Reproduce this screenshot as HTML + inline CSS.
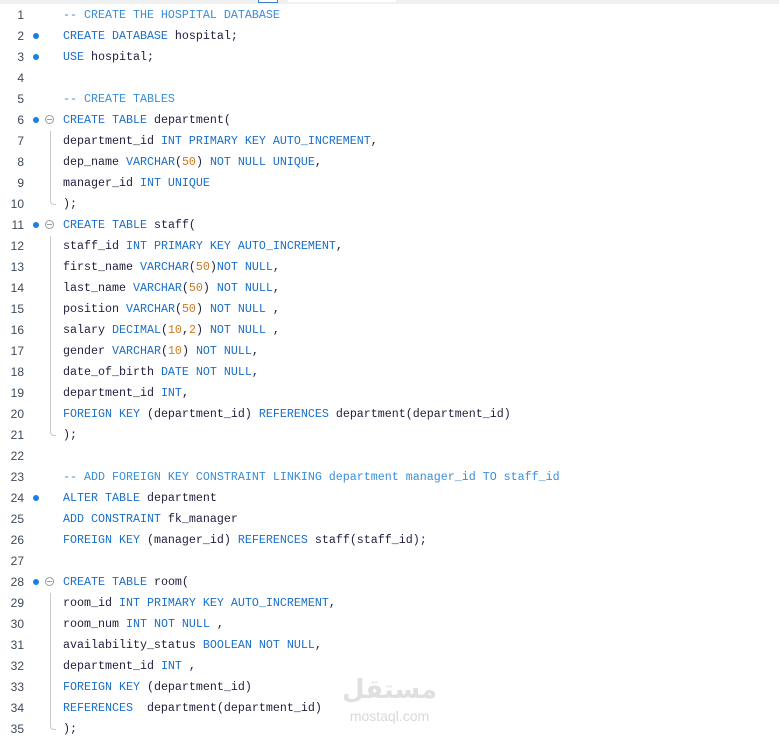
<!DOCTYPE html>
<html><head><style>
body{margin:0;width:779px;height:740px;overflow:hidden;background:#fff;font-family:"Liberation Mono",monospace;font-size:11.67px;}
.top{position:absolute;left:0;top:0;width:779px;height:4px;background:#f0f0f0}
.code{position:absolute;left:0;top:5px;width:779px}
.l{height:21px;line-height:21px;position:relative;white-space:pre;color:#1e1e3c}
.n{position:absolute;left:0;width:24px;text-align:right;color:#3c4a5a;font-family:"Liberation Sans",sans-serif;font-size:12px}
.d{position:absolute;left:33px;top:7px;width:6px;height:6px;border-radius:50%;background:#1a7fe0}
.f{position:absolute;left:45px;top:5px;width:9px;height:9px;border:1px solid #9a9a9a;border-radius:50%;box-sizing:border-box}
.f:after{content:"";position:absolute;left:1px;top:3px;width:5px;height:1px;background:#9a9a9a}
.v{position:absolute;left:50px;top:0;width:1px;height:21px;background:#c8c8c8}
.e{position:absolute;left:50px;top:0;width:5px;height:10px;border-left:1px solid #c8c8c8;border-bottom:1px solid #c8c8c8;border-bottom-left-radius:4px}
.t{position:absolute;left:63px}
.k{color:#1a6fc8}.c{color:#3a8ed8}.o{color:#d0781e}
</style></head><body>
<div class="top"><div style="position:absolute;left:258px;top:0;width:20px;height:3px;border:1px solid #3a7fd0;border-top:none;box-sizing:border-box;background:#fff"></div><div style="position:absolute;left:288px;top:0;width:108px;height:2px;background:#fff"></div></div>
<div class="code">
<div class="l"><span class="n">1</span><span class="t c">-- CREATE THE HOSPITAL DATABASE</span></div>
<div class="l"><span class="n">2</span><span class="d"></span><span class="t"><span class="k">CREATE DATABASE</span> hospital;</span></div>
<div class="l"><span class="n">3</span><span class="d"></span><span class="t"><span class="k">USE</span> hospital;</span></div>
<div class="l"><span class="n">4</span></div>
<div class="l"><span class="n">5</span><span class="t c">-- CREATE TABLES</span></div>
<div class="l"><span class="n">6</span><span class="d"></span><span class="f"></span><span class="t"><span class="k">CREATE TABLE</span> department(</span></div>
<div class="l"><span class="n">7</span><span class="v"></span><span class="t">department_id <span class="k">INT PRIMARY KEY AUTO_INCREMENT</span>,</span></div>
<div class="l"><span class="n">8</span><span class="v"></span><span class="t">dep_name <span class="k">VARCHAR</span>(<span class="o">50</span>) <span class="k">NOT NULL UNIQUE</span>,</span></div>
<div class="l"><span class="n">9</span><span class="v"></span><span class="t">manager_id <span class="k">INT UNIQUE</span></span></div>
<div class="l"><span class="n">10</span><span class="e"></span><span class="t">);</span></div>
<div class="l"><span class="n">11</span><span class="d"></span><span class="f"></span><span class="t"><span class="k">CREATE TABLE</span> staff(</span></div>
<div class="l"><span class="n">12</span><span class="v"></span><span class="t">staff_id <span class="k">INT PRIMARY KEY AUTO_INCREMENT</span>,</span></div>
<div class="l"><span class="n">13</span><span class="v"></span><span class="t">first_name <span class="k">VARCHAR</span>(<span class="o">50</span>)<span class="k">NOT NULL</span>,</span></div>
<div class="l"><span class="n">14</span><span class="v"></span><span class="t">last_name <span class="k">VARCHAR</span>(<span class="o">50</span>) <span class="k">NOT NULL</span>,</span></div>
<div class="l"><span class="n">15</span><span class="v"></span><span class="t">position <span class="k">VARCHAR</span>(<span class="o">50</span>) <span class="k">NOT NULL</span> ,</span></div>
<div class="l"><span class="n">16</span><span class="v"></span><span class="t">salary <span class="k">DECIMAL</span>(<span class="o">10</span>,<span class="o">2</span>) <span class="k">NOT NULL</span> ,</span></div>
<div class="l"><span class="n">17</span><span class="v"></span><span class="t">gender <span class="k">VARCHAR</span>(<span class="o">10</span>) <span class="k">NOT NULL</span>,</span></div>
<div class="l"><span class="n">18</span><span class="v"></span><span class="t">date_of_birth <span class="k">DATE NOT NULL</span>,</span></div>
<div class="l"><span class="n">19</span><span class="v"></span><span class="t">department_id <span class="k">INT</span>,</span></div>
<div class="l"><span class="n">20</span><span class="v"></span><span class="t"><span class="k">FOREIGN KEY</span> (department_id) <span class="k">REFERENCES</span> department(department_id)</span></div>
<div class="l"><span class="n">21</span><span class="e"></span><span class="t">);</span></div>
<div class="l"><span class="n">22</span></div>
<div class="l"><span class="n">23</span><span class="t c">-- ADD FOREIGN KEY CONSTRAINT LINKING department manager_id TO staff_id</span></div>
<div class="l"><span class="n">24</span><span class="d"></span><span class="t"><span class="k">ALTER TABLE</span> department</span></div>
<div class="l"><span class="n">25</span><span class="t"><span class="k">ADD CONSTRAINT</span> fk_manager</span></div>
<div class="l"><span class="n">26</span><span class="t"><span class="k">FOREIGN KEY</span> (manager_id) <span class="k">REFERENCES</span> staff(staff_id);</span></div>
<div class="l"><span class="n">27</span></div>
<div class="l"><span class="n">28</span><span class="d"></span><span class="f"></span><span class="t"><span class="k">CREATE TABLE</span> room(</span></div>
<div class="l"><span class="n">29</span><span class="v"></span><span class="t">room_id <span class="k">INT PRIMARY KEY AUTO_INCREMENT</span>,</span></div>
<div class="l"><span class="n">30</span><span class="v"></span><span class="t">room_num <span class="k">INT NOT NULL</span> ,</span></div>
<div class="l"><span class="n">31</span><span class="v"></span><span class="t">availability_status <span class="k">BOOLEAN NOT NULL</span>,</span></div>
<div class="l"><span class="n">32</span><span class="v"></span><span class="t">department_id <span class="k">INT</span> ,</span></div>
<div class="l"><span class="n">33</span><span class="v"></span><span class="t"><span class="k">FOREIGN KEY</span> (department_id)</span></div>
<div class="l"><span class="n">34</span><span class="v"></span><span class="t"><span class="k">REFERENCES</span>  department(department_id)</span></div>
<div class="l"><span class="n">35</span><span class="e"></span><span class="t">);</span></div>
</div>
<div style="position:absolute;left:342px;top:676px;width:95px;text-align:center;color:#e0e0e0;font-family:'Liberation Sans','DejaVu Sans',sans-serif;font-weight:bold;font-size:26px;line-height:26px">مستقل</div>
<div style="position:absolute;left:342px;top:708px;width:95px;text-align:center;color:#d8d8d8;font-family:'Liberation Sans',sans-serif;font-size:14px;line-height:16px">mostaql.com</div>
</body></html>
